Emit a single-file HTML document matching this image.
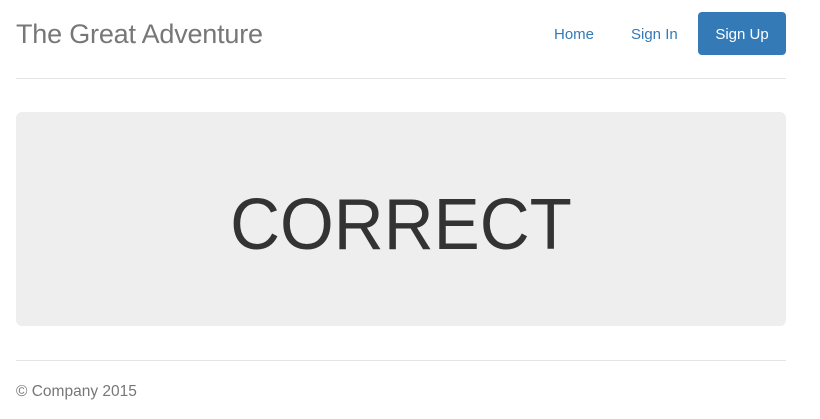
<!DOCTYPE html>
<html><head><meta charset="utf-8"><style>
*{box-sizing:border-box}
body{margin:0;font-family:"Liberation Sans",Arial,sans-serif;font-size:14px;color:#333;background:#fff;width:820px;height:419px;overflow:hidden}
.title{position:absolute;left:16px;top:19px;font-size:27px;color:#777;line-height:30px;margin:0;font-weight:normal;letter-spacing:-0.2px}
.nav a{position:absolute;top:12px;height:43px;line-height:45px;font-size:15px;color:#337ab7;text-decoration:none}
.btn{background:#337ab7;color:#fff!important;border-radius:4px;width:88px;text-align:center;left:698px}
.hr1{position:absolute;left:16px;width:770px;top:78px;border-top:1px solid #e5e5e5}
.jumbo{position:absolute;left:16px;top:112px;width:770px;height:214px;background:#eee;border-radius:6px;text-align:center}
.jumbo div{font-size:72px;line-height:214px;color:#333;position:relative;top:6px;transform:scaleX(0.96)}
.hr2{position:absolute;left:16px;width:770px;top:360px;border-top:1px solid #e5e5e5}
.foot{position:absolute;left:16px;top:383px;font-size:15.5px;color:#777;line-height:18px}
</style></head><body>
<h3 class="title">The Great Adventure</h3>
<div class="nav">
<a style="left:554px">Home</a>
<a style="left:631px">Sign In</a>
<a class="btn">Sign Up</a>
</div>
<div class="hr1"></div>
<div class="jumbo"><div>CORRECT</div></div>
<div class="hr2"></div>
<div class="foot">© Company 2015</div>
</body></html>
